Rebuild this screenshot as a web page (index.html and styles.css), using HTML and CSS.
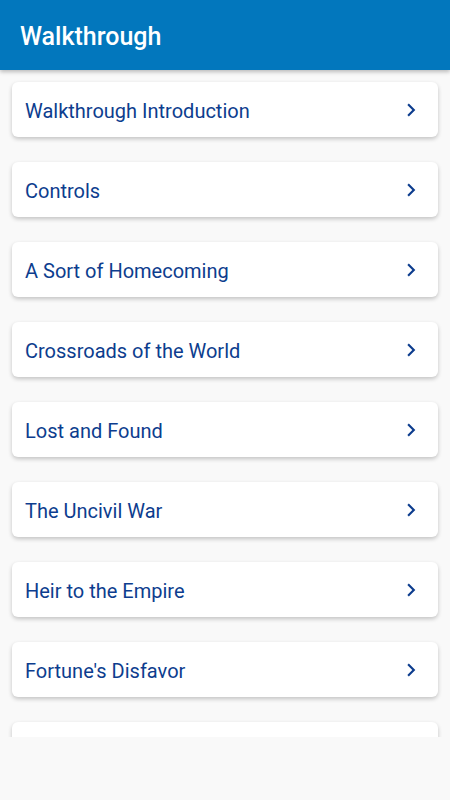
FILE: index.html
```html
<!DOCTYPE html>
<html lang="en">
<head>
  <meta charset="UTF-8" />
  <meta name="viewport" content="width=device-width, initial-scale=1.0" />
  <title>Walkthrough</title>
  <link rel="stylesheet" href="styles.css">
</head>
<body>
  <header class="toolbar">
    <h1>Walkthrough</h1>
  </header>

  <div class="list">
    <a class="item" href="#"><span>Walkthrough Introduction</span><svg class="chev" viewBox="0 0 24 24"><path d="M8.6 16.6 13.2 12 8.6 7.4 10 6l6 6-6 6z"/></svg></a>
    <a class="item" href="#"><span>Controls</span><svg class="chev" viewBox="0 0 24 24"><path d="M8.6 16.6 13.2 12 8.6 7.4 10 6l6 6-6 6z"/></svg></a>
    <a class="item" href="#"><span>A Sort of Homecoming</span><svg class="chev" viewBox="0 0 24 24"><path d="M8.6 16.6 13.2 12 8.6 7.4 10 6l6 6-6 6z"/></svg></a>
    <a class="item" href="#"><span>Crossroads of the World</span><svg class="chev" viewBox="0 0 24 24"><path d="M8.6 16.6 13.2 12 8.6 7.4 10 6l6 6-6 6z"/></svg></a>
    <a class="item" href="#"><span>Lost and Found</span><svg class="chev" viewBox="0 0 24 24"><path d="M8.6 16.6 13.2 12 8.6 7.4 10 6l6 6-6 6z"/></svg></a>
    <a class="item" href="#"><span>The Uncivil War</span><svg class="chev" viewBox="0 0 24 24"><path d="M8.6 16.6 13.2 12 8.6 7.4 10 6l6 6-6 6z"/></svg></a>
    <a class="item" href="#"><span>Heir to the Empire</span><svg class="chev" viewBox="0 0 24 24"><path d="M8.6 16.6 13.2 12 8.6 7.4 10 6l6 6-6 6z"/></svg></a>
    <a class="item" href="#"><span>Fortune's Disfavor</span><svg class="chev" viewBox="0 0 24 24"><path d="M8.6 16.6 13.2 12 8.6 7.4 10 6l6 6-6 6z"/></svg></a>
    <a class="item" href="#"></a>
  </div>
</body>
</html>
```

FILE: styles.css
```css
body {
  margin: 0;
  background: #f9f9f9;
  font-family: Roboto, 'Noto Sans', sans-serif;
  width: 450px;
  height: 800px;
  overflow: hidden;
}
.toolbar {
  height: 70px;
  background: #0277bd;
  display: flex;
  align-items: center;
  padding: 0 20px;
  box-shadow: 0 2px 4px rgba(0,0,0,0.25);
  position: relative;
  z-index: 1;
}
.toolbar h1 {
  margin: 0;
  color: #fff;
  font-size: 25px;
  font-weight: 500;
  padding-top: 3px;
}
.list {
  height: 655px;
  overflow: hidden;
  padding: 12px 12px 0;
  display: flex;
  flex-direction: column;
  gap: 25px;
}
.item {
  flex: none;
  height: 55px;
  background: #fff;
  border-radius: 6px;
  box-shadow: 0 2px 4px rgba(0,0,0,0.22);
  display: flex;
  align-items: center;
  justify-content: space-between;
  padding: 0 14px 0 13px;
  text-decoration: none;
  color: #0d3d8e;
  font-size: 20px;
}
.item span {
  padding-top: 2px;
}
.chev {
  width: 26px;
  height: 26px;
  fill: #0d3d8e;
}
```
